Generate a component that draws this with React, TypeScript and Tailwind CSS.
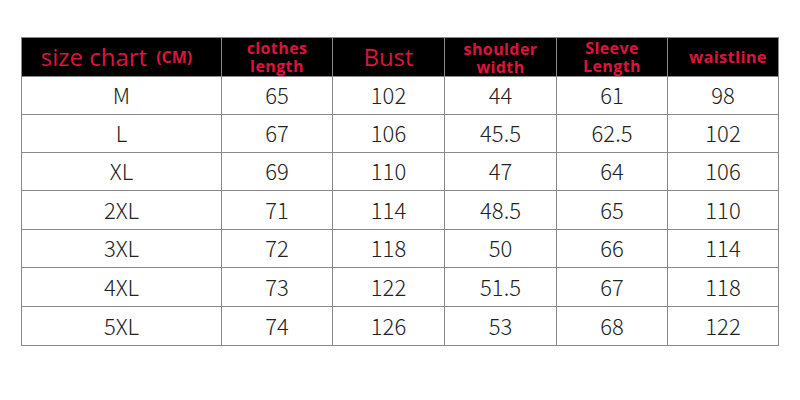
const rows = [
  ["M", "65", "102", "44", "61", "98"],
  ["L", "67", "106", "45.5", "62.5", "102"],
  ["XL", "69", "110", "47", "64", "106"],
  ["2XL", "71", "114", "48.5", "65", "110"],
  ["3XL", "72", "118", "50", "66", "114"],
  ["4XL", "73", "122", "51.5", "67", "118"],
  ["5XL", "74", "126", "53", "68", "122"],
]

const rowHeights = ["h-[38px]", "h-[38px]", "h-[38px]", "h-[39px]", "h-[38px]", "h-[39px]", "h-[39px]"]

const HeadCell = ({ children, className = "" }: { children: React.ReactNode; className?: string }) => (
  <div
    className={`flex h-[38px] flex-col items-center justify-center border-r border-[#8a8a8a] bg-black text-[#dc143c] font-['Open_Sans',sans-serif] ${className}`}
  >
    {children}
  </div>
)

export default function App() {
  return (
    <div className="h-[400px] w-[800px] bg-white pl-[21px] pt-[37px]">
      <div className="w-[758px] border-l border-t border-[#8a8a8a]">
        {/* Header */}
        <div className="grid grid-cols-[200px_111px_112px_112px_111px_111px] border-b border-[#8a8a8a]">
          <HeadCell className="flex-row items-baseline pr-[10px]">
            <span className="text-[24px] leading-none">size chart</span>
            <span className="ml-[9px] text-[16px] font-bold leading-none">(CM)</span>
          </HeadCell>
          <HeadCell className="text-[16px] font-bold leading-[18px] tracking-[0.4px]">
            <span>clothes</span>
            <span>length</span>
          </HeadCell>
          <HeadCell className="text-[24px] leading-none">Bust</HeadCell>
          <HeadCell className="pt-[2px] text-[16px] font-bold leading-[18px] tracking-[0.4px]">
            <span>shoulder</span>
            <span>width</span>
          </HeadCell>
          <HeadCell className="text-[16px] font-bold leading-[18px] tracking-[0.4px]">
            <span>Sleeve</span>
            <span>Length</span>
          </HeadCell>
          <HeadCell className="pl-[10px] text-[16.5px] font-bold leading-none tracking-[0.3px]">waistline</HeadCell>
        </div>

        {/* Body */}
        {rows.map((row, i) => (
          <div
            key={row[0]}
            className={`grid grid-cols-[200px_111px_112px_112px_111px_111px] border-b border-[#8a8a8a] ${rowHeights[i]}`}
          >
            {row.map((cell, j) => (
              <div
                key={j}
                className="flex items-center justify-center pb-[2px] border-r border-[#8a8a8a] font-['Noto_Sans_CJK_KR',sans-serif] text-[22px] font-light text-[#222]"
              >
                {cell}
              </div>
            ))}
          </div>
        ))}
      </div>
    </div>
  )
}
